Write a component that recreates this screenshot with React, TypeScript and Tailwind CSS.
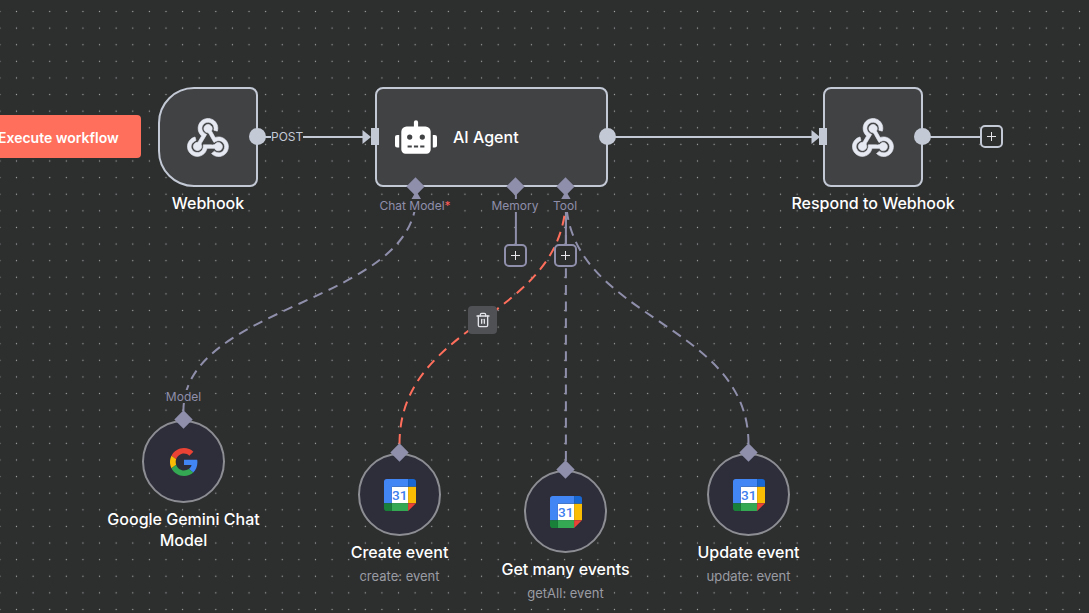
import type { ReactNode } from "react";
import { FaRobot } from "react-icons/fa";
import { Trash2 } from "lucide-react";

function DotGrid() {
  return (
    <svg className="absolute inset-0 h-full w-full" aria-hidden="true">
      <defs>
        <pattern id="dots" x="8.2" y="3.2" width="16.61" height="16.61" patternUnits="userSpaceOnUse">
          <circle cx="8.3" cy="8.3" r="0.65" fill="#a4a6a8" />
        </pattern>
      </defs>
      <rect width="100%" height="100%" fill="url(#dots)" />
    </svg>
  );
}

function Edges() {
  return (
    <svg className="absolute left-0 top-0 h-[613px] w-[1089px]" fill="none" aria-hidden="true">
      <g stroke="#c3c9d5" strokeWidth="2">
        <path d="M258 137H366" />
        <path d="M607 137H814" />
        <path d="M923 137H980" />
      </g>
      <path d="M362.500 130 371 137 362.500 144Z" fill="#c3c9d5" />
      <path d="M811.500 130 820 137 811.500 144Z" fill="#c3c9d5" />
      <g stroke="#8f8fab" strokeWidth="2">
        <path d="M515.900 187V244" />
        <path d="M565.900 187V244" />
        <g strokeDasharray="9.970 6.640">
          <path d="M183.400 411C183.400 303.500 416.200 303.500 416.200 196" />
          <path d="M565.900 461V196" />
          <path d="M748.500 444C748.500 320 565.900 320 565.900 196" />
        </g>
      </g>
      <path
        d="M399.500 444C399.500 320 565.900 320 565.900 196"
        stroke="#ff6f5c"
        strokeWidth="2"
        strokeDasharray="9.970 6.640"
      />
      <path d="M416.200 191 421 199H411.500Z" fill="#8f8fab" />
      <path d="M565.900 191 570.600 199H561.200Z" fill="#8f8fab" />
    </svg>
  );
}

function WebhookIcon() {
  return (
    <svg
      viewBox="-2 -2 260 243"
      className="h-[39px] w-[42px]"
      fill="#e6e9f2"
      stroke="#e6e9f2"
      strokeWidth="4"
      aria-hidden="true"
    >
      <path d="M119.54 100.503c-10.61 17.836-20.775 35.108-31.152 52.25-2.665 4.401-3.984 7.986-1.855 13.58 5.878 15.454-2.414 30.493-17.998 34.575-14.697 3.851-29.016-5.808-31.932-21.543-2.584-13.927 8.224-27.58 23.58-29.757 1.286-.184 2.6-.205 4.762-.367l23.358-39.168C73.612 95.465 64.868 78.39 66.803 57.23c1.368-14.957 7.25-27.883 18-38.477 20.59-20.288 52.002-23.573 76.246-8.001 23.284 14.958 33.948 44.094 24.858 69.031-6.854-1.858-13.756-3.732-21.343-5.79 2.854-13.865.743-26.315-8.608-36.981-6.178-7.042-14.106-10.733-23.12-12.093-18.072-2.73-35.815 8.88-41.08 26.618-5.976 20.13 3.069 36.575 27.784 48.967z" />
      <path d="M149.841 79.41c7.475 13.187 15.065 26.573 22.587 39.836 38.02-11.763 66.686 9.284 76.97 31.817 12.422 27.219 3.93 59.457-20.465 76.25-25.04 17.238-56.707 14.293-78.892-7.851 5.654-4.733 11.336-9.487 17.407-14.566 21.912 14.192 41.077 13.524 55.305-3.282 12.133-14.337 11.87-35.714-.615-49.75-14.408-16.197-33.707-16.691-57.035-1.143-9.677-17.168-19.522-34.199-28.893-51.491-3.16-5.828-6.648-9.21-13.77-10.443-11.893-2.062-19.571-12.275-20.032-23.717-.453-11.316 6.214-21.545 16.634-25.53 10.322-3.949 22.435-.762 29.378 8.014 5.674 7.17 7.477 15.24 4.491 24.083-.83 2.466-1.905 4.852-3.07 7.774z" />
      <path d="M167.707 187.21h-45.77c-4.387 18.044-13.863 32.612-30.19 41.876-12.693 7.2-26.373 9.641-40.933 7.29-26.808-4.323-48.728-28.456-50.658-55.63-2.184-30.784 18.975-58.147 47.178-64.293 1.947 7.071 3.915 14.21 5.862 21.264-25.876 13.202-34.832 29.836-27.59 50.636 6.375 18.304 24.484 28.337 44.147 24.457 20.08-3.962 30.204-20.65 28.968-47.432 19.036 0 38.088-.197 57.126.097 7.434.117 13.173-.654 18.773-7.208 9.22-10.784 26.191-9.811 36.121.374 10.148 10.409 9.662 27.157-1.077 37.127-10.361 9.62-26.73 9.106-36.424-1.26-1.992-2.136-3.562-4.673-5.533-7.298z" />
    </svg>
  );
}

function GoogleIcon() {
  return (
    <svg viewBox="0 0 48 48" className="size-7" aria-hidden="true">
      <path fill="#ea4335" d="M24 9.500c3.540 0 6.710 1.220 9.210 3.600l6.850-6.850C35.900 2.380 30.470 0 24 0 14.620 0 6.510 5.380 2.560 13.220l7.980 6.190C12.430 13.720 17.740 9.500 24 9.500z" />
      <path fill="#4285f4" d="M46.980 24.550c0-1.570-.15-3.090-.38-4.550H24v9.020h12.940c-.58 2.960-2.260 5.480-4.780 7.180l7.730 6c4.510-4.180 7.090-10.360 7.090-17.650z" />
      <path fill="#fbbc05" d="M10.530 28.590c-.48-1.450-.76-2.990-.76-4.590s.27-3.140.76-4.590l-7.980-6.190C.92 16.460 0 20.120 0 24c0 3.880.92 7.540 2.560 10.780l7.970-6.190z" />
      <path fill="#34a853" d="M24 48c6.480 0 11.930-2.130 15.890-5.810l-7.730-6c-2.150 1.450-4.920 2.300-8.160 2.300-6.260 0-11.570-4.220-13.470-9.910l-7.980 6.190C6.510 42.620 14.620 48 24 48z" />
    </svg>
  );
}

function CalendarIcon() {
  return (
    <svg viewBox="3.750 3.750 192.500 192.500" className="size-8" aria-hidden="true">
      <path fill="#fff" d="M51 51h98v98H51z" />
      <path fill="#4285f4" d="M19.540 3.750C10.800 3.750 3.750 10.800 3.750 19.540V148.900h47.400V51.100h97.750V3.750z" />
      <path fill="#1967d2" d="M196.250 51.100V19.540c0-8.740-7.070-15.790-15.790-15.790h-31.560V51.100z" />
      <path fill="#fbbc04" d="M148.900 51.100h47.350v97.800H148.900z" />
      <path fill="#34a853" d="M51.100 148.900h97.800v47.350H51.100z" />
      <path fill="#188038" d="M3.750 148.900v31.560c0 8.720 7.070 15.790 15.790 15.790H51.100V148.900z" />
      <path fill="#ea4335" d="M148.900 196.250l47.350-47.350H148.900z" />
      <text x="99" y="130" textAnchor="middle" fontSize="82" fontWeight="500" fontFamily="Roboto, sans-serif" fill="#3f80ee">
        31
      </text>
    </svg>
  );
}

function PlusButton({ label, className }: { label: string; className: string }) {
  return (
    <button
      type="button"
      aria-label={label}
      className={`flex size-[23px] shrink-0 items-center justify-center rounded-[5px] border-2 bg-[#2d2e2e] ${className}`}
    >
      <svg viewBox="0 0 9 9" className="size-[9px]" stroke="#e6e6ea" aria-hidden="true">
        <path d="M4.500 0v9M0 4.500h9" />
      </svg>
    </button>
  );
}

const Diamond = () => <span className="z-10 size-[13px] shrink-0 rotate-45 bg-[#8f8fab]" />;

const OutputDot = () => <span className="absolute -right-[10px] top-[39px] size-[17px] rounded-full bg-[#c3c9d5]" />;

const InputBar = () => <span className="absolute -left-[6px] top-[39px] h-[17px] w-2 bg-[#c3c9d5]" />;

function PortLabel({ children }: { children: ReactNode }) {
  return (
    <span className="whitespace-nowrap bg-[#2d2e2e] text-[12px] leading-[13px] text-[#8f8fab]">{children}</span>
  );
}

function AgentPort({ className, label, addLabel }: { className: string; label: ReactNode; addLabel?: string }) {
  return (
    <li className={`flex flex-col items-center ${className}`}>
      <Diamond />
      <div className="mt-[6px] flex">
        <PortLabel>{label}</PortLabel>
      </div>
      {addLabel && <PlusButton label={addLabel} className="mt-8 border-[#8f8fab]" />}
    </li>
  );
}

function CircleNode({
  className,
  portLabel,
  title,
  subtitle,
  children,
}: {
  className: string;
  portLabel?: string;
  title: string;
  subtitle?: string;
  children: ReactNode;
}) {
  return (
    <section className={`absolute flex w-[165px] flex-col items-center text-center ${className}`}>
      {portLabel && (
        <div className="mb-[10px] flex">
          <PortLabel>{portLabel}</PortLabel>
        </div>
      )}
      <Diamond />
      <div className="-mt-[6px] flex size-[83px] items-center justify-center rounded-full border-2 border-[#8d8e94] bg-[#2d2e3a]">
        {children}
      </div>
      <h2 className="mt-[6px] text-base font-medium leading-[21px] text-white">{title}</h2>
      {subtitle && <p className="mt-[3px] text-[13px] leading-5 text-[#9a9ca3]">{subtitle}</p>}
    </section>
  );
}

export default function App() {
  return (
    <main className="relative min-h-screen w-full overflow-hidden bg-[#2d2e2e] font-['Inter',sans-serif]">
      <DotGrid />
      <Edges />

      <button
        type="button"
        className="absolute -left-[42px] top-[115px] flex h-[43px] items-center whitespace-nowrap rounded bg-[#ff6f5c] pl-10 pr-[22px] pt-0.5 text-sm font-semibold text-white"
      >
        Execute workflow
      </button>

      <section className="absolute left-[158px] top-[87px] w-[100px]">
        <div className="relative flex h-[100px] items-center justify-center rounded-l-[36px] rounded-r-lg border-2 border-[#c3c9d5] bg-[#414244]">
          <WebhookIcon />
          <OutputDot />
        </div>
        <h2 className="mt-[6px] text-center text-base font-medium leading-[21px] text-white">Webhook</h2>
      </section>
      <span className="absolute left-[271px] top-[129px] bg-[#2d2e2e] text-[12px] leading-4 text-[#c3c9d5]">POST</span>

      <section className="absolute left-[375px] top-[87px] w-[233px]">
        <div className="relative flex h-[100px] items-center gap-4 rounded-lg border-2 border-[#c3c9d5] bg-[#414244] pl-[18px]">
          <InputBar />
          <FaRobot className="size-[42px] text-white" aria-hidden="true" />
          <h2 className="text-base font-medium leading-[21px] text-white">AI Agent</h2>
          <OutputDot />
        </div>
        <ul className="-ml-px -mt-[7px] flex items-start">
          <AgentPort
            className="w-[82px]"
            label={
              <>
                Chat Model<span className="text-[#ff5a55]">*</span>
              </>
            }
          />
          <AgentPort className="ml-[34px] w-[50px]" label="Memory" addLabel="Add memory" />
          <AgentPort className="w-[50px]" label="Tool" addLabel="Add tool" />
        </ul>
      </section>

      <section className="absolute left-[788px] top-[87px] flex w-[170px] flex-col items-center">
        <div className="relative flex size-[100px] items-center justify-center rounded-lg border-2 border-[#c3c9d5] bg-[#414244]">
          <InputBar />
          <WebhookIcon />
          <OutputDot />
        </div>
        <h2 className="mt-[6px] whitespace-nowrap text-base font-medium leading-[21px] text-white">
          Respond to Webhook
        </h2>
      </section>
      <PlusButton label="Add node" className="absolute left-[980px] top-[125px] border-[#c3c9d5]" />

      <button
        type="button"
        aria-label="Delete connection"
        className="absolute left-[468px] top-[306px] flex h-7 w-[29px] items-center justify-center rounded bg-[#505154] text-[#e2e4ea]"
      >
        <Trash2 className="size-4" />
      </button>

      <CircleNode className="left-[101px] top-[390px]" portLabel="Model" title="Google Gemini Chat Model">
        <GoogleIcon />
      </CircleNode>
      <CircleNode className="left-[317px] top-[446px]" title="Create event" subtitle="create: event">
        <CalendarIcon />
      </CircleNode>
      <CircleNode className="left-[483px] top-[463px]" title="Get many events" subtitle="getAll: event">
        <CalendarIcon />
      </CircleNode>
      <CircleNode className="left-[666px] top-[446px]" title="Update event" subtitle="update: event">
        <CalendarIcon />
      </CircleNode>
    </main>
  );
}
